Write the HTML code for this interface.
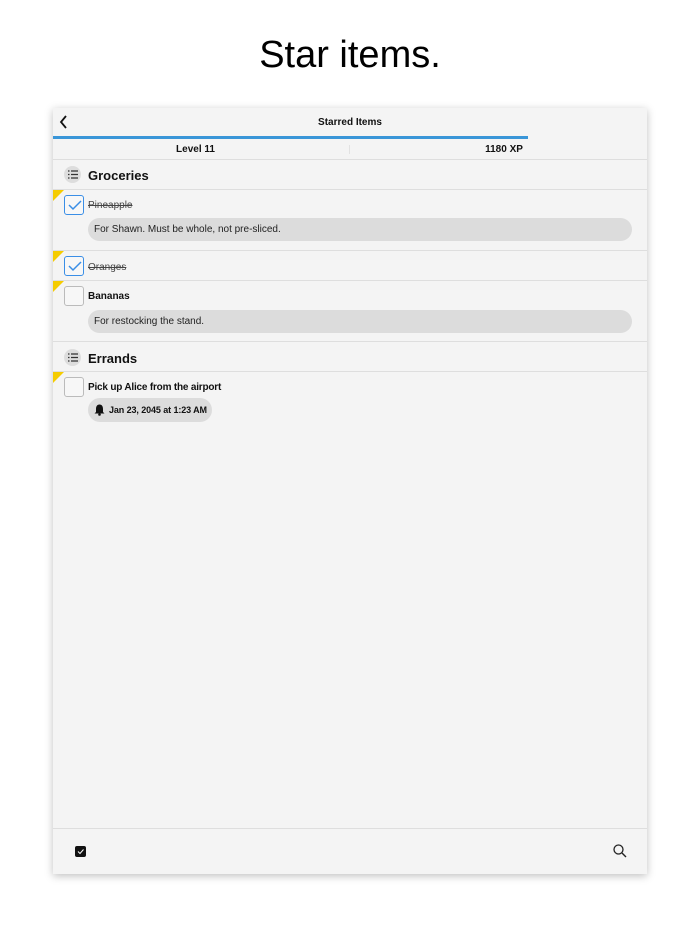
<!DOCTYPE html><html><head><style>
body{margin:0;width:700px;height:934px;background:#fff;font-family:"Liberation Sans",sans-serif;position:relative;overflow:hidden}
.t{position:absolute;top:34px;left:0;width:700px;text-align:center;font-size:38px;color:#000}
.dev{position:absolute;left:53px;top:108px;width:594px;height:766px;background:#f4f4f4;box-shadow:0 2px 8px rgba(0,0,0,.25)}
.a{position:absolute}
.line{position:absolute;left:0;width:594px;height:1px;background:#dedede}
.b{font-weight:bold;color:#111}
.cb{position:absolute;left:11px;width:18px;height:18px;border:1.5px solid #bbb;border-radius:3px;background:#f7f7f7}
.cb.on{border-color:#3a8ee6}
.star{position:absolute;left:0;width:0;height:0;border-top:11px solid #f5cc00;border-right:11px solid transparent}
.note{position:absolute;left:35px;width:544px;height:23px;border-radius:12px;background:#dcdcdc;font-size:10px;line-height:24px;padding-left:6px;box-sizing:border-box;color:#222}
.ic{position:absolute;left:11px;width:17px;height:17px;border-radius:50%;background:#ddd}
.s{text-decoration:line-through;color:#444;font-size:10px}
</style></head><body>
<div class="t">Star items.</div>
<div class="dev">
<svg class="a" style="left:6px;top:7px" width="10" height="14"><path d="M7 1L2 7l5 6" stroke="#111" stroke-width="1.8" fill="none"/></svg>
<div class="a b" style="left:0;width:594px;top:9px;text-align:center;font-size:10px">Starred Items</div>
<div class="a" style="left:0;top:28px;width:475px;height:3px;background:#3a96d8"></div>
<div class="a b" style="left:0;width:285px;top:36px;text-align:center;font-size:10px">Level 11</div>
<div class="a" style="left:296px;top:37px;width:1px;height:9px;background:#e2e2e2"></div>
<div class="a b" style="left:300px;width:302px;top:36px;text-align:center;font-size:10px">1180 XP</div>
<div class="line" style="top:51px"></div>
<div class="ic" style="top:58px"></div>
<svg class="a" style="left:15px;top:62px" width="10" height="9"><g stroke="#333" stroke-width="1.2"><path d="M0 1h1.5M3 1h7M0 4.5h1.5M3 4.5h7M0 8h1.5M3 8h7"/></g></svg>
<div class="a b" style="left:35px;top:60px;font-size:13px">Groceries</div>
<div class="line" style="top:81px"></div>
<div class="star" style="top:82px"></div>
<div class="cb on" style="top:87px"></div>
<svg class="a" style="left:15px;top:92px" width="14" height="11"><path d="M1 5l4 4 8-8" stroke="#3a8ee6" stroke-width="1.5" fill="none"/></svg>
<div class="a s" style="left:35px;top:92px">Pineapple</div>
<div class="note" style="top:110px">For Shawn. Must be whole, not pre-sliced.</div>
<div class="line" style="top:142px"></div>
<div class="star" style="top:143px"></div>
<div class="cb on" style="top:148px"></div>
<svg class="a" style="left:15px;top:153px" width="14" height="11"><path d="M1 5l4 4 8-8" stroke="#3a8ee6" stroke-width="1.5" fill="none"/></svg>
<div class="a s" style="left:35px;top:154px">Oranges</div>
<div class="line" style="top:172px"></div>
<div class="star" style="top:173px"></div>
<div class="cb" style="top:178px"></div>
<div class="a b" style="left:35px;top:183px;font-size:10px">Bananas</div>
<div class="note" style="top:202px">For restocking the stand.</div>
<div class="line" style="top:233px"></div>
<div class="ic" style="top:241px"></div>
<svg class="a" style="left:15px;top:245px" width="10" height="9"><g stroke="#333" stroke-width="1.2"><path d="M0 1h1.5M3 1h7M0 4.5h1.5M3 4.5h7M0 8h1.5M3 8h7"/></g></svg>
<div class="a b" style="left:35px;top:243px;font-size:13px">Errands</div>
<div class="line" style="top:263px"></div>
<div class="star" style="top:264px"></div>
<div class="cb" style="top:269px"></div>
<div class="a b" style="left:35px;top:274px;font-size:10px;letter-spacing:-0.2px">Pick up Alice from the airport</div>
<div class="a" style="left:35px;top:290px;width:124px;height:24px;border-radius:12px;background:#dcdcdc"></div>
<svg class="a" style="left:41px;top:296px" width="11" height="12"><path d="M5.5 0.5C3 0.5 2 2.5 2 5v3L0.5 9.5h10L9 8V5C9 2.5 8 0.5 5.5 0.5z" fill="#111"/><circle cx="5.5" cy="10.5" r="1.3" fill="#111"/></svg>
<div class="a b" style="left:56px;top:297px;font-size:9px;letter-spacing:-0.1px">Jan 23, 2045 at 1:23 AM</div>
<div class="line" style="top:720px"></div>
<div class="a" style="left:22px;top:738px;width:11px;height:11px;background:#111;border-radius:2px"></div>
<svg class="a" style="left:23px;top:739px" width="9" height="9"><path d="M2 4.5l2 2 3.5-4" stroke="#fff" stroke-width="1" fill="none"/></svg>
<svg class="a" style="left:560px;top:736px" width="14" height="14"><circle cx="5.5" cy="5.5" r="4.5" stroke="#222" stroke-width="1.3" fill="none"/><path d="M9 9l4 4" stroke="#222" stroke-width="1.4"/></svg>
</div>
</body></html>
